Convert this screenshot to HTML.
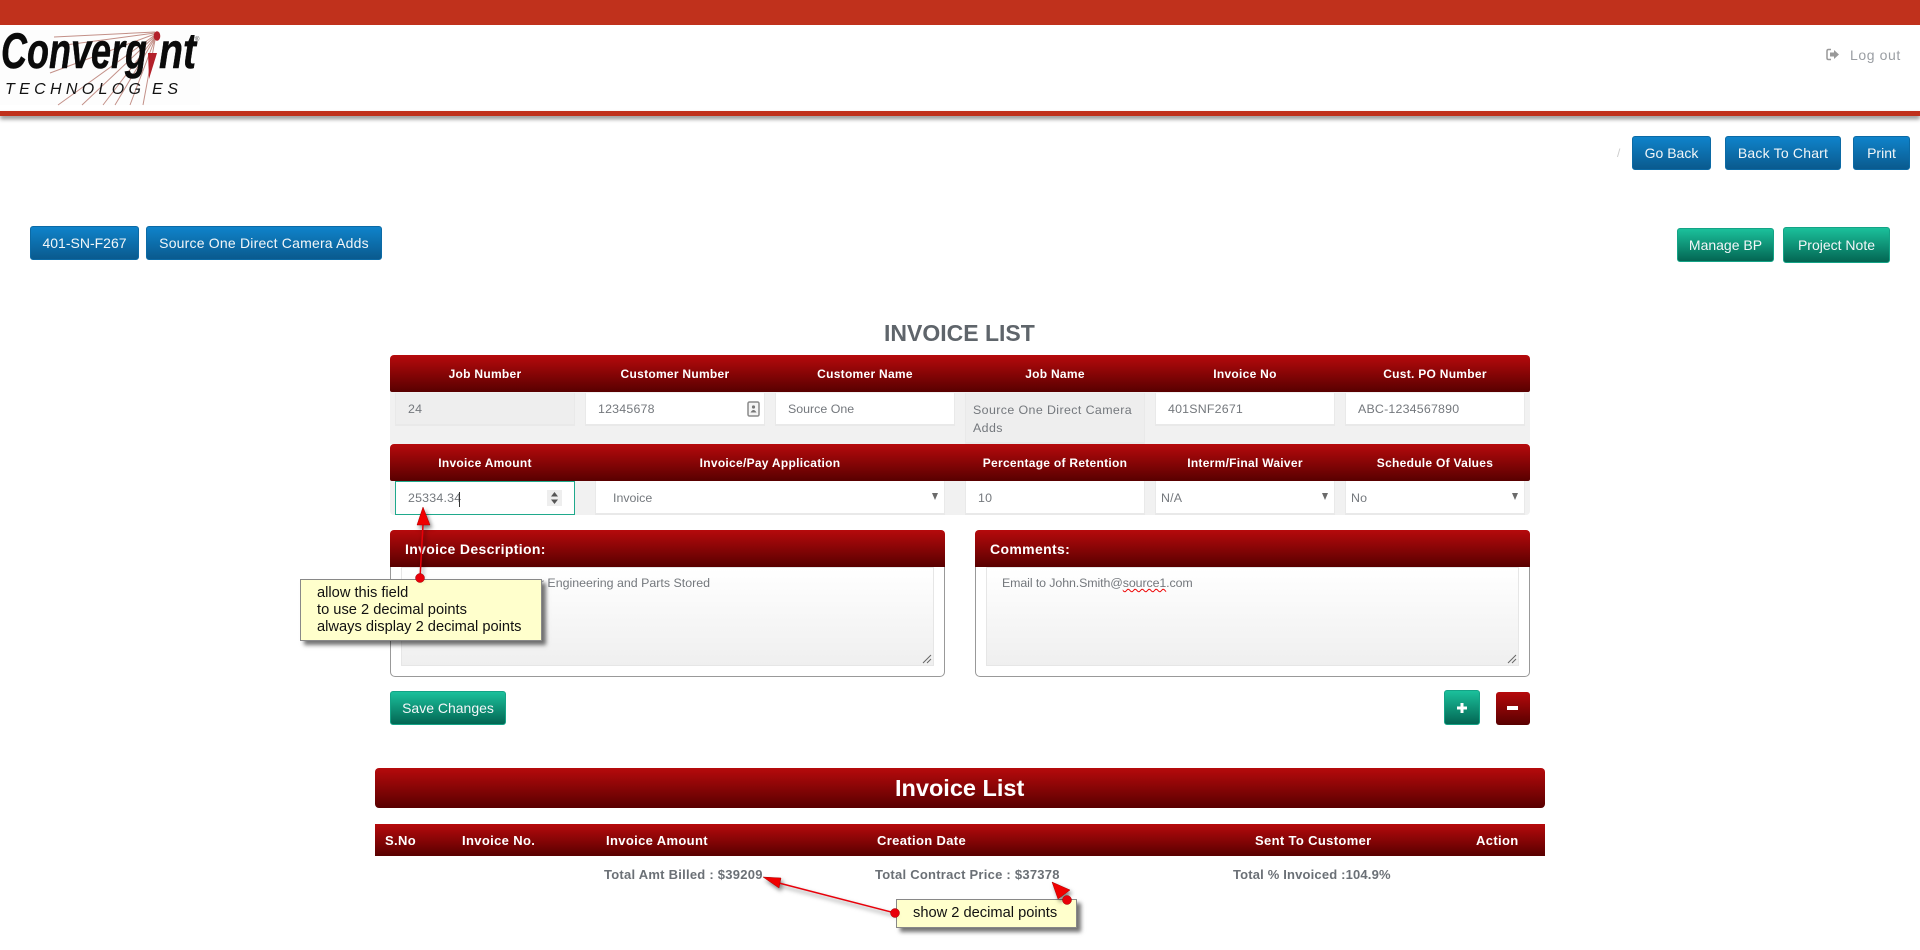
<!DOCTYPE html>
<html lang="en"><head><meta charset="utf-8"><title>Invoice List</title>
<style>
*{box-sizing:border-box}
html,body{margin:0;padding:0;background:#fff;width:1920px;height:950px;overflow:hidden}
body{font-family:"Liberation Sans",Arial,sans-serif;position:relative;color:#6d7278}
.a{position:absolute;white-space:nowrap}
.red{background:linear-gradient(#b60a0c,#580000);color:#fff}
.blue,.teal{color:#f2f6f8;font-size:14px;text-align:center;border-radius:3px;display:flex;align-items:center;justify-content:center}
.blue{background:linear-gradient(#0f83ca,#0a5a8e);border:1px solid #0c6aa5}
.teal{background:linear-gradient(#1bc09b,#036653);border:1px solid #14a386}
.hd{font-weight:bold;font-size:12px;text-align:center;transform:translateX(-50%);color:#fff;line-height:14px;letter-spacing:.28px}
.in{background:#fff;border:1px solid #e9e9e9;border-width:0 1px 2px 1px;height:33px;font-size:12.4px;line-height:33px;padding-left:12px;letter-spacing:.2px;color:#74787d}
.r2{height:34px;line-height:35px}
.sel:after{content:"";position:absolute;right:6px;top:12px;border-left:3px solid transparent;border-right:3px solid transparent;border-top:7px solid #6a6a6a}
.panel{border:1px solid #999;border-radius:5px;background:#fff}
.panel .ph{height:37px;border-radius:4px 4px 0 0;font-weight:bold;font-size:14px;line-height:38px;padding-left:15px;color:#fff;margin:-1px -1px 0;letter-spacing:.35px}
.ta{position:absolute;top:36px;height:99px;background:linear-gradient(#fff,#efefef);border:1px solid #e6e6e6}
.note{background:#ffc;border:1px solid #888;box-shadow:4px 4px 4px rgba(0,0,0,.55);color:#111;font-size:14.67px;line-height:17px}
.th{font-weight:bold;font-size:13px;color:#fff;line-height:16px;top:833px;letter-spacing:.35px}
.tot{font-weight:bold;font-size:13px;color:#6b7076;top:867px;line-height:16px;letter-spacing:.25px}
</style></head><body>

<!-- header -->
<div class="a" style="left:0;top:0;width:1920px;height:25px;background:#c0311c"></div>
<div class="a" style="left:0;top:111px;width:1920px;height:5px;background:#c0311c;box-shadow:0 3px 4px rgba(0,0,0,.45)"></div>

<svg class="a" style="left:0;top:25px" width="205" height="85" viewBox="0 25 205 85">
<rect x="0" y="30" width="200" height="75" fill="#fdfdfd"/>
<g stroke="#c39088" stroke-width="1" fill="none">
<path d="M155 32L54 37M155 33L58 46M155 34L50 73M155 35L58 105M155 36L82 105M155 37L103 105M155 38L115 105M155 39L130 105M155 40L143 105"/>
</g>
<text x="1" y="68" font-family="Liberation Sans" font-weight="bold" font-style="italic" font-size="50" textLength="146" lengthAdjust="spacingAndGlyphs" fill="#0a0a0a" stroke="#0a0a0a" stroke-width=".5">Converg</text>
<text x="159" y="68" font-family="Liberation Sans" font-weight="bold" font-style="italic" font-size="50" textLength="37" lengthAdjust="spacingAndGlyphs" fill="#0a0a0a" stroke="#0a0a0a" stroke-width=".5">nt</text>
<ellipse cx="157" cy="36" rx="3.3" ry="4.8" fill="#b3202a"/>
<path d="M148 53L157 53L149 79Z" fill="#b3202a"/>
<text x="5" y="94" font-family="Liberation Sans" font-style="italic" font-size="16" textLength="136" lengthAdjust="spacing" fill="#111">TECHNOLOG</text>
<text x="152" y="94" font-family="Liberation Sans" font-style="italic" font-size="16" textLength="26" lengthAdjust="spacing" fill="#111">ES</text>
<text x="195" y="41" font-family="Liberation Sans" font-size="6" fill="#444">®</text>
</svg>

<svg class="a" style="left:1826px;top:48px" width="14" height="13" viewBox="0 0 14 13">
<path d="M5 1.500H2.500Q1 1.500 1 3V10Q1 11.500 2.500 11.500H5" fill="none" stroke="#999" stroke-width="1.500"/>
<path d="M4 4.500H8V2L13 6.500L8 11V8.500H4Z" fill="#999"/>
</svg>
<div class="a" style="left:1850px;top:47px;font-size:14px;line-height:16px;color:#9a9ea3;letter-spacing:.6px">Log out</div>

<!-- top buttons -->
<div class="a" style="left:1617px;top:146px;font-size:12px;color:#ccc;line-height:14px">/</div>
<div class="a blue" style="left:1632px;top:136px;width:79px;height:34px">Go Back</div>
<div class="a blue" style="left:1725px;top:136px;width:116px;height:34px;letter-spacing:.2px">Back To Chart</div>
<div class="a blue" style="left:1853px;top:136px;width:57px;height:34px">Print</div>
<div class="a blue" style="left:30px;top:226px;width:109px;height:34px">401-SN-F267</div>
<div class="a blue" style="left:146px;top:226px;width:236px;height:34px;letter-spacing:.2px">Source One Direct Camera Adds</div>
<div class="a teal" style="left:1677px;top:228px;width:97px;height:34px">Manage BP</div>
<div class="a teal" style="left:1783px;top:227px;width:107px;height:36px">Project Note</div>

<div class="a" style="left:884px;top:320px;font-size:23px;line-height:26px;font-weight:bold;color:#5f656b">INVOICE LIST</div>

<!-- form -->
<div class="a" style="left:390px;top:392px;width:1140px;height:52px;background:#f1f1f1"></div>
<div class="a" style="left:390px;top:481px;width:1140px;height:34px;background:#f1f1f1;border-radius:0 0 4px 4px"></div>
<div class="a red" style="left:390px;top:355px;width:1140px;height:37px;border-radius:4px 4px 2px 2px"></div>
<div class="a red" style="left:390px;top:444px;width:1140px;height:37px;border-radius:4px 4px 2px 2px"></div>

<div class="a hd" style="left:485px;top:367px">Job Number</div>
<div class="a hd" style="left:675px;top:367px">Customer Number</div>
<div class="a hd" style="left:865px;top:367px">Customer Name</div>
<div class="a hd" style="left:1055px;top:367px">Job Name</div>
<div class="a hd" style="left:1245px;top:367px">Invoice No</div>
<div class="a hd" style="left:1435px;top:367px">Cust. PO Number</div>
<div class="a hd" style="left:485px;top:456px">Invoice Amount</div>
<div class="a hd" style="left:770px;top:456px">Invoice/Pay Application</div>
<div class="a hd" style="left:1055px;top:456px">Percentage of Retention</div>
<div class="a hd" style="left:1245px;top:456px">Interm/Final Waiver</div>
<div class="a hd" style="left:1435px;top:456px">Schedule Of Values</div>

<div class="a in" style="left:395px;top:393px;width:180px;background:#eee">24</div>
<div class="a in" style="left:585px;top:393px;width:180px">12345678</div>
<svg class="a" style="left:747px;top:401px" width="13" height="16" viewBox="0 0 13 16">
<rect x="1" y="1" width="11" height="14" rx="1.500" fill="#f4f4f4" stroke="#8a8a8a" stroke-width="1.500"/>
<circle cx="6.500" cy="6" r="1.600" fill="#777"/><path d="M3.500 11.500Q6.500 6.500 9.500 11.500Z" fill="#777"/>
</svg>
<div class="a in" style="left:775px;top:393px;width:180px;letter-spacing:0">Source One</div>
<div class="a in" style="left:965px;top:393px;width:180px;height:51px;background:#eee;padding-left:7px;white-space:normal;line-height:18px;padding-top:8px;letter-spacing:.4px">Source One Direct Camera Adds</div>
<div class="a in" style="left:1155px;top:393px;width:180px">401SNF2671</div>
<div class="a in" style="left:1345px;top:393px;width:180px">ABC-1234567890</div>

<div class="a in r2" style="left:395px;top:481px;width:180px;border:1px solid #1fa98c;line-height:33px">25334.34</div>
<div class="a" style="left:459px;top:492px;width:1px;height:15px;background:#333"></div>
<div class="a" style="left:547px;top:490px;width:15px;height:16px;background:#eee"></div>
<svg class="a" style="left:550px;top:491px" width="9" height="14" viewBox="0 0 9 14"><path d="M4.500 1L8 5.500H1ZM1 8.500H8L4.500 13Z" fill="#555"/></svg>
<div class="a in sel r2" style="left:595px;top:481px;width:350px;padding-left:17px;letter-spacing:0">Invoice</div>
<div class="a in r2" style="left:965px;top:481px;width:180px">10</div>
<div class="a in sel r2" style="left:1155px;top:481px;width:180px;padding-left:5px">N/A</div>
<div class="a in sel r2" style="left:1345px;top:481px;width:180px;padding-left:5px">No</div>

<!-- panels -->
<div class="a panel" style="left:390px;top:530px;width:555px;height:147px">
 <div class="ph red">Invoice Description:</div>
 <div class="ta" style="left:10px;width:533px"></div>
</div>
<div class="a" style="left:537px;top:575px;width:173px;height:16px;overflow:hidden;font-size:12.4px;line-height:16px;color:#74787d"><span style="position:absolute;right:0;top:0">Invoice for Engineering and Parts Stored</span></div>
<svg class="a" style="left:921px;top:653px" width="11" height="11" viewBox="0 0 11 11"><path d="M2 10L10 2M6 10L10 6" stroke="#666" stroke-width="1"/></svg>

<div class="a panel" style="left:975px;top:530px;width:555px;height:147px">
 <div class="ph red">Comments:</div>
 <div class="ta" style="left:10px;width:533px"></div>
</div>
<div class="a" style="left:1002px;top:575px;font-size:12.4px;letter-spacing:-.1px;line-height:16px;color:#74787d">Email to John.Smith@<span style="text-decoration:underline wavy #e00;text-decoration-thickness:1px">source1</span>.com</div>
<svg class="a" style="left:1506px;top:653px" width="11" height="11" viewBox="0 0 11 11"><path d="M2 10L10 2M6 10L10 6" stroke="#666" stroke-width="1"/></svg>

<div class="a teal" style="left:390px;top:691px;width:116px;height:34px">Save Changes</div>
<div class="a teal" style="left:1444px;top:690px;width:36px;height:35px;font-size:22px;font-weight:bold;color:#fff"><svg width="12" height="12" viewBox="0 0 12 12"><path d="M4.500 1H7.500V4.500H11V7.500H7.500V11H4.500V7.500H1V4.500H4.500Z" fill="#fff"/></svg></div>
<div class="a red" style="left:1496px;top:692px;width:34px;height:33px;border-radius:3px"><div style="position:absolute;left:11px;top:14px;width:11px;height:4px;background:#fff"></div></div>

<!-- list -->
<div class="a red" style="left:375px;top:768px;width:1170px;height:40px;border-radius:4px"></div>
<div class="a" style="left:895px;top:774px;font-size:23.5px;line-height:28px;font-weight:bold;color:#fff">Invoice List</div>
<div class="a red" style="left:375px;top:824px;width:1170px;height:32px"></div>
<div class="a th" style="left:385px">S.No</div>
<div class="a th" style="left:462px">Invoice No.</div>
<div class="a th" style="left:606px">Invoice Amount</div>
<div class="a th" style="left:877px">Creation Date</div>
<div class="a th" style="left:1255px">Sent To Customer</div>
<div class="a th" style="left:1476px">Action</div>
<div class="a tot" style="left:604px">Total Amt Billed : $39209</div>
<div class="a tot" style="left:875px">Total Contract Price : $37378</div>
<div class="a tot" style="left:1233px;letter-spacing:.17px">Total % Invoiced :104.9%</div>

<!-- annotations -->
<div class="a note" style="left:300px;top:579px;width:242px;height:62px;padding:5px 0 0 16px">allow this field<br>to use 2 decimal points<br>always display 2 decimal points</div>
<div class="a note" style="left:896px;top:899px;width:181px;height:29px;padding:5px 0 0 16px">show 2 decimal points</div>
<svg class="a" style="left:0;top:0;pointer-events:none" width="1920" height="950">
<g style="filter:drop-shadow(2px 3px 2px rgba(0,0,0,.5))">
<path d="M423 525L420 578" stroke="#e8000a" stroke-width="1.500"/>
<path d="M423 507L430 525L417 525Z" fill="#f00000" stroke="#a00" stroke-width=".5"/>
<path d="M775 882L895 913" stroke="#e8000a" stroke-width="1.500"/>
<path d="M763 877L781 878L779 888Z" fill="#f00000" stroke="#a00" stroke-width=".5"/>
<path d="M1052 882L1070 890L1058 899Z" fill="#f00000" stroke="#a00" stroke-width=".5"/>
</g>
<ellipse cx="420" cy="578" rx="4.500" ry="4.500" fill="#e8000a" stroke="#900" stroke-width=".5"/>
<ellipse cx="895" cy="913" rx="4.500" ry="4.500" fill="#e8000a" stroke="#900" stroke-width=".5"/>
<ellipse cx="1067" cy="900" rx="4.500" ry="4.500" fill="#e8000a" stroke="#900" stroke-width=".5"/>
</svg>
</body></html>
